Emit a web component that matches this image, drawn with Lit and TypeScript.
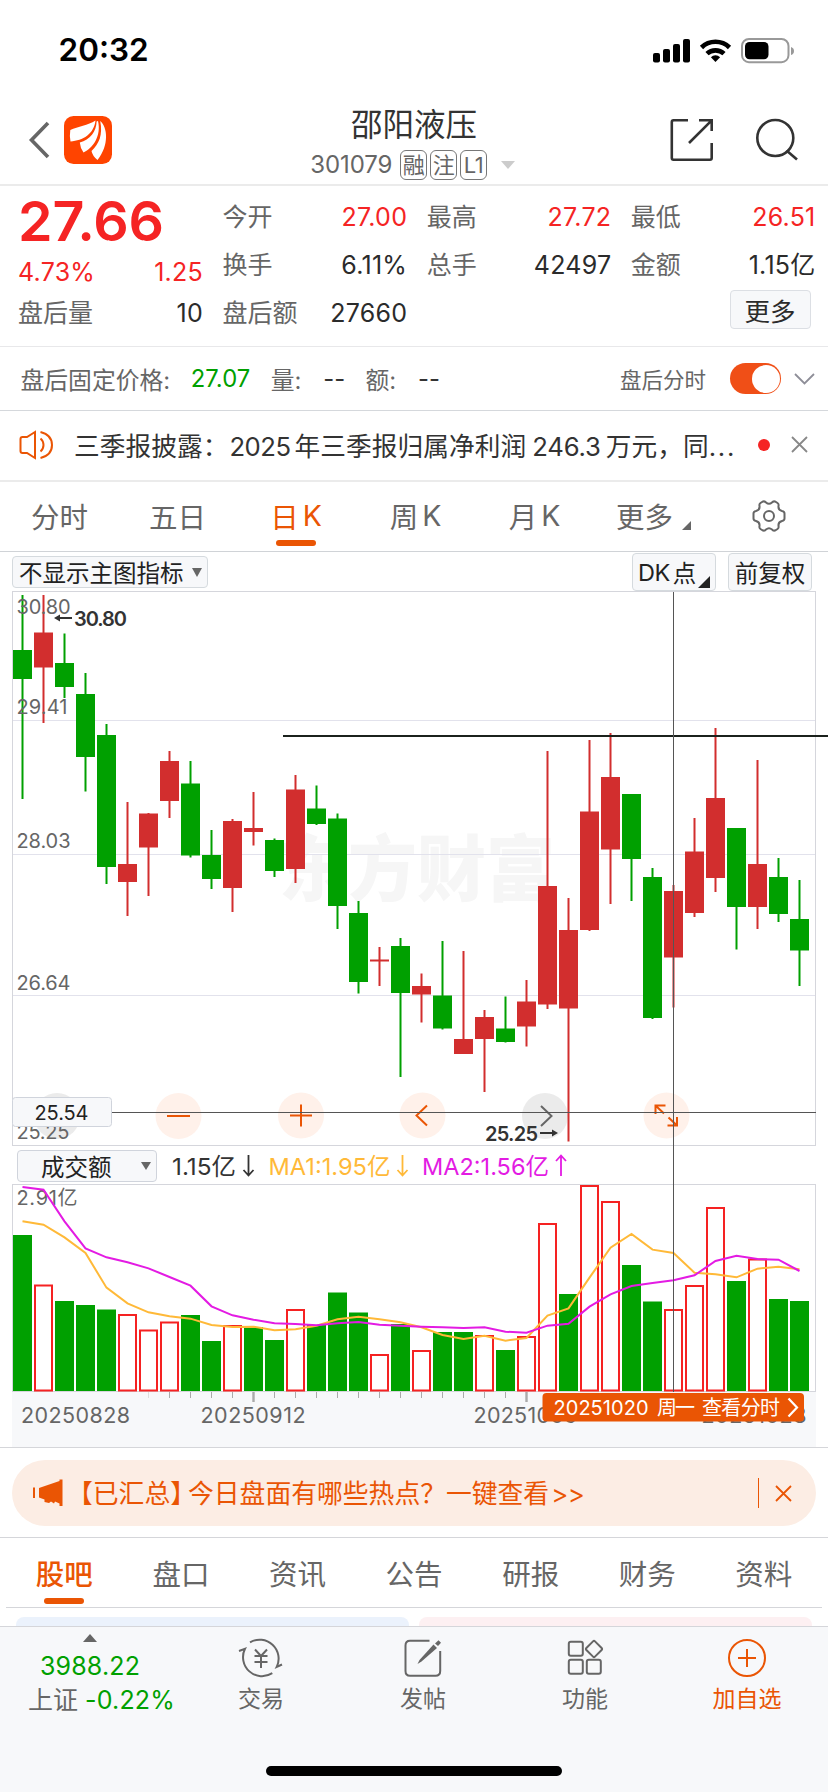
import { LitElement, html, css, svg } from "lit";
import { customElement } from "lit/decorators.js";

type Candle = [up: number, high: number, top: number, bottom: number, low: number];

const CANDLES: Candle[] = [
  [0, 595, 650, 679, 799], [1, 595, 632.5, 667.5, 723], [0, 633.5, 663, 687, 698], [0, 673, 694, 757, 791.5],
  [0, 724, 735, 867, 884], [1, 802, 864, 882, 916], [1, 813, 813.5, 847.5, 896], [1, 751, 761, 801, 818],
  [0, 761, 783.5, 855.5, 857.5], [0, 830, 855, 879, 889], [1, 819, 821, 888, 912], [1, 792, 828, 832, 845.5],
  [0, 838.5, 840, 871, 877], [1, 775, 789.5, 869, 883], [0, 785.5, 808.5, 824, 825], [0, 813.5, 818.5, 906, 929],
  [0, 901, 913, 982, 993.5], [1, 947, 959.5, 961.5, 986], [0, 938, 946, 993, 1077], [1, 973.5, 986, 994.5, 1022.5],
  [0, 941, 995.5, 1028.5, 1029.5], [1, 951, 1039, 1054, 1054], [1, 1010, 1017, 1039, 1092], [0, 996.5, 1028.5, 1042, 1042.5],
  [1, 980, 1001.5, 1026.5, 1046.5], [1, 751, 886, 1004.5, 1009], [1, 898, 930, 1008.5, 1141.5], [1, 740, 811.5, 930, 931],
  [1, 733, 777, 849.5, 904], [0, 794, 794, 859, 901], [0, 868, 877, 1018, 1019], [1, 885, 891, 957.5, 1007.5],
  [1, 818, 851.5, 913, 917], [1, 728, 798, 878, 892], [0, 828, 828, 907, 949.5], [1, 760, 864, 907, 929],
  [0, 858, 877, 914, 922], [0, 880, 919, 950.5, 986],
];

// [hollow, top]
const VOLUMES: [number, number][] = [
  [0, 1235], [1, 1284.5], [0, 1301], [0, 1305], [0, 1309.5], [1, 1314], [1, 1329.5], [1, 1321.5], [0, 1315], [0, 1341],
  [1, 1325], [0, 1327], [0, 1340], [1, 1309], [0, 1325], [0, 1292.5], [0, 1312.5], [1, 1354], [0, 1324], [1, 1350],
  [0, 1332], [0, 1332], [1, 1335], [0, 1350], [1, 1336], [1, 1223], [0, 1294], [1, 1185], [1, 1201], [0, 1265],
  [0, 1301.5], [1, 1309], [1, 1285], [1, 1207], [0, 1281], [1, 1258.5], [0, 1299], [0, 1301],
];

const MA1 = [244, 254, 292, 339, 443, 490, 517, 529, 536, 555, 561, 560, 571, 568, 557, 538, 530, 538, 547, 562, 585, 597, 587, 602, 594, 527, 505, 413, 323, 282, 329, 339, 398, 403, 412, 386, 380, 388];
const MA2 = [141, 149, 244, 325, 352, 367, 385, 411, 437, 499, 526, 539, 550, 552, 556, 550, 546, 554, 557, 560, 562, 564, 562, 575, 578, 557, 551, 500, 463, 438, 429, 421, 406, 363, 347, 357, 359, 393];

const cx = (i: number) => 22.5 + 21 * i;
const line = (ma: number[]) => ma.map((v, i) => `${cx(i)},${1140 + v / 3}`).join(" ");

const FONT = css`
  :host {
    font-family: Inter, "Noto Sans CJK SC", sans-serif;
    box-sizing: border-box;
  }
  *, *::before, *::after { box-sizing: border-box; }
  svg { display: block; flex: none; }
`;

@customElement("status-header")
class StatusHeader extends LitElement {
  static styles = [FONT, css`
    :host { display: block; height: 186px; border-bottom: 2px solid #ebebeb; }
    .status { height: 96px; display: flex; align-items: center; justify-content: space-between; padding: 3px 34px 0 58.500px; }
    .time { font-size: 31.500px; font-weight: 600; color: #000; letter-spacing: 0; }
    .nav { height: 88px; display: grid; grid-template-columns: 300px 1fr 300px; align-items: center; }
    .left { display: flex; align-items: center; padding-left: 28px; gap: 13px; }
    .mid { display: flex; flex-direction: column; align-items: center; color: #333; }
    .name { font-size: 31.500px; line-height: 40px; margin-top: 7px; }
    .code { display: flex; align-items: center; height: 36px; font-size: 24px; color: #666; gap: 2.500px; margin: 2px 0 0 -3px; }
    .num { margin-right: 5px; letter-spacing: -.1px; }
    .tag { height: 30px; width: 27.500px; border: 1.500px solid #777; border-radius: 6px; font-size: 22px; display: flex; align-items: center; justify-content: center; letter-spacing: -.5px; line-height: 1; }
    .drop { width: 0; border: 7px solid transparent; border-top: 8px solid #ccc; border-bottom: 0; margin-left: 11px; }
    .right { display: flex; align-items: center; justify-content: flex-end; gap: 41px; padding-right: 29px; }
  `];
  render() {
    return html`
      <div class="status">
        <span class="time">20:32</span>
        <svg width="142" height="28" viewBox="652 35 142 28">
          <g>
            <rect x="653" y="52" width="7" height="9.5" rx="2" /><rect x="663" y="48" width="7" height="13.5" rx="2" />
            <rect x="673" y="43" width="7" height="18.5" rx="2" /><rect x="683" y="38" width="7" height="23.5" rx="2" />
          </g>
          <g fill="none" stroke="#000" stroke-width="4.6">
            <path d="M701.5 46.5a20 20 0 0 1 28 0" /><path d="M707 52.7a12.4 12.4 0 0 1 17 0" />
          </g>
          <path d="M715.5 61l-4.6-4.8a6.6 6.6 0 0 1 9.2 0z" />
          <rect x="742" y="38" width="46.5" height="23.2" rx="7" fill="none" stroke="#999" stroke-width="2" />
          <rect x="745" y="41" width="23.5" height="17.2" rx="4.5" />
          <path d="M791 46q3 1 3 4t-3 4z" fill="#999" />
        </svg>
      </div>
      <div class="nav">
        <div class="left">
          <svg width="23" height="40" viewBox="0 0 23 40"><path d="M20 3L3.5 20 20 37" fill="none" stroke="#666" stroke-width="3.6" /></svg>
          <svg width="48" height="48" viewBox="0 0 48 48">
            <rect width="48" height="48" rx="9.5" fill="#ff4400" />
            <g fill="#fff">
              <path d="M31.5 4.500C24 9.500 14 10.500 6.300 14Q5.400 19.500 6.500 25.500C19 24.500 30 18 31.500 4.500Z" />
              <path d="M32.600 5.500C32.500 15 26 24 15.800 26.500Q16.200 32 19.500 36.500C29 32 37.500 20 34 5Z" />
              <path d="M36.200 5C43.500 11 45.500 29 33.500 44Q28.500 40 27.500 35C35 28 39 19 36.200 5Z" />
            </g>
          </svg>
        </div>
        <div class="mid">
          <div class="name">邵阳液压</div>
          <div class="code"><span class="num">301079</span><span class="tag">融</span><span class="tag">注</span><span class="tag">L1</span><i class="drop"></i></div>
        </div>
        <div class="right">
          <svg width="44" height="44" viewBox="669 118 44 44" fill="none" stroke="#333" stroke-width="2.6">
            <path d="M687 120.300H672.500Q670.800 120.300 670.800 122V158Q670.800 159.700 672.500 159.700H709Q710.700 159.700 710.700 158V143M698 120.300H710.700V131M710.700 120.300L688 143" />
          </svg>
          <svg width="44" height="44" viewBox="755 118 44 44" fill="none" stroke="#333" stroke-width="2.6">
            <circle cx="775.300" cy="138" r="18" /><path d="M786.500 150.500L797 159.500" />
          </svg>
        </div>
      </div>`;
  }
}

@customElement("quote-panel")
class QuotePanel extends LitElement {
  static styles = [FONT, css`
    :host { display: block; }
    .grid { height: 161px; border-bottom: 1px solid #e8e8ea; display: flex; gap: 19.500px; padding: 7px 12.500px 0 18px; }
    .col { display: flex; flex-direction: column; flex: 1; }
    .first { flex: 0 0 185px; }
    .cell { height: 48px; display: flex; align-items: center; justify-content: space-between; font-size: 25px; color: #666; line-height: 1; }
    .cell b { font-weight: 400; color: #2b2b2b; letter-spacing: .25px; }
    .cell .r, .price { color: #f52424; }
    .price { height: 56px; font-size: 55.500px; font-weight: 600; line-height: 56px; letter-spacing: -.2px; }
    .chg { height: 46px; }
    .first .last { margin-top: -6px; }
    .btn { align-self: flex-end; margin: 1px 5px 0 0; width: 81px; height: 39px; background: #f7f8fa; border: 1px solid #dcdfe4; border-radius: 4px; font-size: 25.500px; display: flex; align-items: center; justify-content: center; color: #2b2b2b; }
    .after { height: 64px; border-bottom: 1px solid #d5d8dc; display: flex; align-items: center; padding: 0 13px 0 20.500px; font-size: 23.800px; color: #666; white-space: pre; }
    .after b { font-weight: 400; color: #333; letter-spacing: .1px; }
    .after .g { color: #00a000; width: 60px; margin: 0 20px 0 20.500px; }
    .after .d { margin: 0 20px 0 22px; }
    .small { font-size: 21.500px; margin-left: auto; }
    .toggle { width: 51px; height: 31px; border-radius: 16px; background: #f04f17; margin: 0 13px 0 24px; padding: 1.500px; display: flex; justify-content: flex-end; }
    .toggle i { width: 28px; height: 28px; border-radius: 50%; background: #fff; }
  `];
  render() {
    const cell = (k: string, v: string, red = false) => html`<div class="cell">${k}<b class=${red ? "r" : ""}>${v}</b></div>`;
    return html`
      <div class="grid">
        <div class="col first">
          <div class="price">27.66</div>
          <div class="cell chg"><b class="r">4.73%</b><b class="r">1.25</b></div>
          <div class="cell last">盘后量<b>10</b></div>
        </div>
        <div class="col">${cell("今开", "27.00", true)}${cell("换手", "6.11%")}${cell("盘后额", "27660")}</div>
        <div class="col">${cell("最高", "27.72", true)}${cell("总手", "42497")}</div>
        <div class="col">${cell("最低", "26.51", true)}${cell("金额", "1.15亿")}<div class="btn">更多</div></div>
      </div>
      <div class="after">
        <span>盘后固定价格:</span><b class="g">27.07</b><span>量:</span><b class="d">--</b><span>额:</span><b class="d">--</b>
        <span class="small">盘后分时</span><span class="toggle"><i></i></span>
        <svg width="21" height="12" viewBox="0 0 21 12"><path d="M1 1L10.500 10.500 20 1" fill="none" stroke="#8e8e98" stroke-width="1.800" /></svg>
      </div>`;
  }
}

@customElement("news-strip")
class NewsStrip extends LitElement {
  static styles = [FONT, css`
    :host { display: flex; align-items: center; height: 71px; padding: 0 20px 2px 19px; border-bottom: 2px solid #ebebeb; }
    .text { margin-left: 20px; font-size: 25.700px; color: #333; width: 664px; white-space: nowrap; letter-spacing: .05px; }
    .n { margin: 0 4px 0 1px; letter-spacing: -.5px; }
    .m { margin: 0 5px 0 6px; letter-spacing: -.2px; }
    .e { letter-spacing: 1.700px; }
    .dot { width: 12px; height: 12px; border-radius: 50%; background: #f52424; margin: 0 21px 0 auto; }
  `];
  render() {
    return html`
      <svg width="35" height="30" viewBox="19 430 35 30" fill="none" stroke="#ea5504" stroke-width="2">
        <path d="M35 432L27 437H22.500Q20.500 437 20.500 439V451Q20.500 453 22.500 453H27L35 458ZM40.500 438.500Q43.500 441 43.500 445T40.500 451.500M40.500 432Q52 435 52 445T40.500 458" />
      </svg>
      <div class="text">三季报披露：<span class="n">2025</span>年三季报归属净利润<span class="m">246.3</span>万元，同<span class="e">...</span></div>
      <i class="dot"></i>
      <svg width="17" height="17" viewBox="0 0 17 17"><path d="M1 1L16 16M16 1L1 16" stroke="#888" stroke-width="1.800" /></svg>`;
  }
}

@customElement("period-tabs")
class PeriodTabs extends LitElement {
  static styles = [FONT, css`
    :host { display: block; }
    .tabs { height: 70px; border-bottom: 1px solid #d0d3d7; display: grid; grid-template-columns: 119px 117px 120px 119px 119px 123px 1fr; font-size: 28.500px; color: #666; }
    .tab { display: flex; align-items: center; justify-content: center; gap: 4px; padding-bottom: 2px; white-space: nowrap; position: relative; }
    .on { color: #ea5504; }
    .on::after { content: ""; position: absolute; left: 40px; bottom: 5px; width: 40px; height: 6px; border-radius: 3px; background: #ea5504; }
    .more { padding-left: 0; gap: 9px; justify-content: flex-end; padding-right: 26px; }
    .tri { border-left: 9px solid transparent; border-bottom: 9px solid #666; margin-top: 19px; }
    .gear { justify-content: flex-start; padding-left: 35px; }
    .tools { height: 39px; display: flex; align-items: flex-start; padding: 1px 16px 0 12px; font-size: 23.500px; color: #222; }
    .btn { background: #f7f8fa; border: 1px solid #d5dade; border-radius: 4px; display: flex; align-items: center; white-space: nowrap; }
    .sel { height: 32px; width: 196px; margin: 3px auto 0 0; padding: 0 0 0 6px; gap: 8px; }
    .down { border: 5px solid transparent; border-top: 9px solid #666; border-bottom: 0; }
    .dk { width: 84px; height: 38px; padding-left: 5px; margin-right: 12px; position: relative; gap: 3px; }
    .dk i { position: absolute; right: 5px; bottom: 2px; border-left: 12px solid transparent; border-bottom: 12px solid #222; }
    .fq { width: 84px; height: 38px; justify-content: center; }
    .k { letter-spacing: -.5px; }
  `];
  render() {
    return html`
      <div class="tabs">
        <div class="tab">分时</div><div class="tab">五日</div><div class="tab on">日<span>K</span></div>
        <div class="tab">周<span>K</span></div><div class="tab">月<span>K</span></div>
        <div class="tab more">更多<i class="tri"></i></div>
        <div class="tab gear"><svg width="34" height="32" viewBox="-17 -16 34 32" fill="none" stroke="#666" stroke-width="2">
          <path d="M-6 -14.500Q-4 -15 -3 -13.500Q0 -11 3 -13.500Q4 -15 6 -14.500L8.500 -13Q10 -12 9.500 -10Q9 -6 13 -5Q15.500 -4.500 15.500 -2.500V2.500Q15.500 4.500 13 5Q9 6 9.500 10Q10 12 8.500 13L6 14.500Q4 15 3 13.500Q0 11 -3 13.500Q-4 15 -6 14.500L-8.500 13Q-10 12 -9.500 10Q-9 6 -13 5Q-15.500 4.500 -15.500 2.500V-2.500Q-15.500 -4.500 -13 -5Q-9 -6 -9.500 -10Q-10 -12 -8.500 -13Z" /><circle r="5" />
        </svg></div>
      </div>
      <div class="tools">
        <div class="btn sel">不显示主图指标<i class="down"></i></div>
        <div class="btn dk"><span class="k">DK</span>点<i></i></div>
        <div class="btn fq">前复权</div>
      </div>`;
  }
}

@customElement("stock-chart")
class StockChart extends LitElement {
  static styles = [FONT, css`
    :host { display: block; position: relative; }
    .info { height: 38px; display: flex; align-items: center; padding: 2px 0 0 17px; }
    .sel { width: 140px; height: 32px; border: 1px solid #d0d4dc; border-radius: 4px; background: #f7f8fa; font-size: 23.500px; color: #222; display: flex; align-items: center; justify-content: space-between; padding: 0 5px 0 23px; }
    .sel i { border: 5px solid transparent; border-top: 8px solid #666; border-bottom: 0; }
    .over { position: absolute; inset: 0; }
    svg text { font-size: 20px; fill: #666; }
    text.mark { font-weight: 600; fill: #333; }
    text.water { font-size: 72px; font-weight: 900; fill: #f6f6f6; }
    text.cur { fill: #222; }
    text.tag { fill: #fff; }
    text.date { font-size: 21.500px; }
    text.met { font-size: 23.500px; }
    text.now { fill: #333; } text.m1 { fill: #ffb938; } text.m2 { fill: #e31be3; }
  `];
  render() {
    const red = "#d22e2e", green = "#00a000";
    const t = (x: number, y: number, w: number, s: string, c = "") =>
      svg`<text x=${x} y=${y} textLength=${w} lengthAdjust=${c === "water" || c.startsWith("met") ? "spacingAndGlyphs" : "spacing"} class=${c}>${s}</text>`;
    return html`
      <svg width="828" height="555" viewBox="0 591 828 555">
        <rect x="12.500" y="591.500" width="803" height="554" fill="#fff" stroke="#d5d6dc" />
        ${t(279, 895, 276, "东方财富", "water")}
        <path d="M13 720.500H815M13 854.500H815M13 995.500H815" stroke="#e2e2ec" />
        <g>
          <circle cx="57" cy="1116" r="23" fill="#ebebeb" /><circle cx="178.500" cy="1116" r="23" fill="#fff1ea" />
          <circle cx="301" cy="1115.500" r="23" fill="#fff1ea" /><circle cx="422.500" cy="1115.500" r="23" fill="#fff1ea" />
          <circle cx="545" cy="1116" r="23" fill="#ebebeb" /><circle cx="666.500" cy="1115.500" r="23" fill="#fff1ea" />
        </g>
        ${CANDLES.map(([up, hi, top, bot, lo], i) => svg`
          <rect x=${cx(i) - 1} y=${hi} width="2" height=${lo - hi} fill=${up ? red : green} />
          <rect x=${cx(i) - 9.5} y=${top} width="19" height=${bot - top} fill=${up ? red : green} />`)}
        ${t(16.5, 614, 54, "30.80")}${t(16.5, 714, 51, "29.41")}${t(16.5, 848, 54, "28.03")}${t(16.5, 990, 54, "26.64")}${t(16.5, 1139, 53, "25.25")}
        <path d="M59 618H72" stroke="#333" stroke-width="2" /><path d="M54 618L60 614.500V621.500Z" fill="#333" />
        ${t(74, 626, 53, "30.80", "mark")}${t(485, 1140.5, 53, "25.25", "mark")}
        <path d="M540 1133H553" stroke="#333" stroke-width="2" /><path d="M558 1133L552 1129.500V1136.500Z" fill="#333" />
        <path d="M283 736H828" stroke="#1b211c" stroke-width="2.200" />
        <g stroke="#ea5504" stroke-width="2" fill="none">
          <path d="M167 1116H190M290 1115.500H312M301 1104.500V1126.500M427 1105.500L416.500 1115.500 427 1125.500" />
          <path d="M655.500 1114V1105.500H665.500M656 1106L664 1113.500M677 1117V1125.500H667.500M668.500 1117.500L676.500 1125" />
        </g>
        <path d="M541 1106L551.500 1116 541 1126" stroke="#666" stroke-width="2" fill="none" />
      </svg>
      <div class="info">
        <div class="sel">成交额<i></i></div>
      </div>
      <svg width="828" height="264" viewBox="0 1184 828 264">
        <rect x="12" y="1392" width="804" height="55" fill="#f7f8fa" />
        <rect x="12.500" y="1184.500" width="803" height="207" fill="#fff" stroke="#d5d6dc" />
        ${VOLUMES.map(([h, top], i) => h
          ? svg`<rect x=${cx(i) - 8.5} y=${top + 1} width="17" height=${1389.5 - top} fill="#fff" stroke="#f52222" stroke-width="2" />`
          : svg`<rect x=${cx(i) - 9.5} y=${top} width="19" height=${1391 - top} fill=${green} />`)}
        ${t(16.5, 1205, 61, "2.91亿")}
        <polyline points=${line(MA1)} fill="none" stroke="#ffb938" stroke-width="2" />
        <polyline points=${line(MA2)} fill="none" stroke="#e31be3" stroke-width="2" />
        ${Array.from({ length: 19 }, (_, k) => k + 6).map((i) => {
          const major = i === 11 || i === 24;
          return svg`<path d="M${cx(i)} 1392V${major ? 1402 : 1398}" stroke=${i === 6 ? "#ddd" : "#aaa"} stroke-width=${major ? 2.4 : 1} />`;
        })}
        ${t(21, 1422.500, 109, "20250828", "date")}${t(200.5, 1422.500, 105, "20250912", "date")}
        ${t(473.5, 1422.500, 104, "20251009", "date")}${t(701.5, 1422.500, 105, "20251028", "date")}
        <path d="M0 1447.500H828" stroke="#d5d6da" />
      </svg>
      <svg class="over" width="828" height="857" viewBox="0 591 828 857">
        ${t(172, 1174.500, 64, "1.15亿", "met now")}${t(268.5, 1174.500, 122, "MA1:1.95亿", "met m1")}${t(422, 1174.500, 127, "MA2:1.56亿", "met m2")}
        <g fill="none" stroke-width="1.800">
          <path d="M248.500 1155V1175M243.500 1170L248.500 1175.500 253.500 1170" stroke="#333" />
          <path d="M402.500 1155V1175M397.500 1170L402.500 1175.500 407.500 1170" stroke="#ffb938" />
          <path d="M561 1176V1156M556 1161L561 1155.500 566 1161" stroke="#e31be3" />
        </g>
        <path d="M13 1112.500H816" stroke="#555" /><path d="M673.500 592V1392" stroke="#555" />
        <rect x="12.500" y="1097.500" width="99" height="29" rx="3" fill="#f7f8fa" stroke="#d0d4dc" />
        ${t(34.5, 1119.500, 54, "25.54", "cur")}
        <rect x="542.500" y="1393" width="261.500" height="28.500" rx="4" fill="#ea5504" />
        ${t(553.5, 1414.500, 95, "20251020", "tag")}${t(657, 1414.500, 38, "周一", "tag")}${t(702, 1414.500, 78, "查看分时", "tag")}
        <path d="M788.500 1398.500L797 1407.500 788.500 1416.500" fill="none" stroke="#fff" stroke-width="2.200" />
      </svg>`;
  }
}

@customElement("promo-tabs")
class PromoTabs extends LitElement {
  static styles = [FONT, css`
    :host { display: block; }
    .wrap { height: 90px; padding: 12px 12px 0; border-bottom: 1px solid #d5d6da; }
    .pill { height: 66px; border-radius: 33px; background: #fcede4; color: #ea5504; display: flex; align-items: center; padding: 0 24px 0 20px; font-size: 25.800px; white-space: nowrap; }
    .txt { margin: 0 auto 0 4px; padding-bottom: 3px; }
    .br { margin-right: -8px; }
    .gt { letter-spacing: -.5px; margin-left: 2px; }
    .close { border-left: 1.500px solid #ea5504; height: 30px; padding-left: 16px; display: flex; align-items: center; }
    .tabs { height: 70px; margin: 0 6px; border-bottom: 1px solid #d5d6da; display: grid; grid-template-columns: repeat(7, 116.600px); font-size: 28.500px; color: #666; }
    .tab { display: flex; align-items: center; justify-content: center; position: relative; padding-bottom: 1px; }
    .on { color: #ea5504; font-weight: 500; }
    .on::after { content: ""; position: absolute; left: 38px; bottom: 3px; width: 40px; height: 6px; border-radius: 3px; background: #ea5504; }
    .cards { height: 18px; padding: 9px 16px 0; display: grid; grid-template-columns: 1fr 1fr; gap: 10px; }
    .card { border-radius: 8px 8px 0 0; background: #ebf2fc; }
    .pink { background: #fdf0f2; }
  `];
  render() {
    return html`
      <div class="wrap"><div class="pill">
        <svg width="31" height="28" viewBox="31 1479 31 28" fill="#ea5504"><path d="M38 1488L58.500 1481V1479.500H61.500V1506H58.500V1503.500L54 1501.500 53 1503.500 50 1501.500 48 1503 43.500 1502V1499.500L38 1497.500Z" /><path d="M32 1487.500H34V1498H32Z" /></svg>
        <span class="txt"><span class="br">【已汇总】</span>今日盘面有哪些热点？一键查看<span class="gt">&gt;&gt;</span></span>
        <span class="close"><svg width="17" height="17" viewBox="0 0 17 17"><path d="M1 1L16 16M16 1L1 16" stroke="#ea5504" stroke-width="1.800" /></svg></span>
      </div></div>
      <div class="tabs">${["股吧", "盘口", "资讯", "公告", "研报", "财务", "资料"].map((s, i) => html`<div class="tab ${i ? "" : "on"}">${s}</div>`)}</div>
      <div class="cards"><div class="card"></div><div class="card pink"></div></div>`;
  }
}

@customElement("bottom-bar")
class BottomBar extends LitElement {
  static styles = [FONT, css`
    :host { display: flex; flex-direction: column; align-items: center; height: 166px; background: #f7f8fa; border-top: 1px solid #d5d6da; }
    .row { display: grid; grid-template-columns: 180px repeat(4, 162px); width: 828px; height: 139px; }
    .item { display: flex; flex-direction: column; align-items: center; color: #666; font-size: 23px; padding-top: 9px; line-height: 34px; }
    .item svg { margin-bottom: 2px; }
    .hot { color: #ea5504; }
    .idx { display: flex; flex-direction: column; align-items: center; padding-top: 7px; color: #666; font-size: 25px; line-height: 34px; white-space: nowrap; }
    .up { border: 7px solid transparent; border-bottom: 8px solid #666; border-top: 0; margin-bottom: 7px; }
    .g { color: #00a000; letter-spacing: .15px; }
    .home { width: 296px; height: 10px; border-radius: 5px; background: #000; }
    .pair { display: flex; gap: 7px; margin-left: 23px; }
  `];
  render() {
    return html`
      <div class="row">
        <div class="idx"><i class="up"></i><span class="g">3988.22</span><span class="pair">上证<span class="g">-0.22%</span></span></div>
        <div class="item"><svg width="46" height="44" viewBox="18 11 46 44" fill="none" stroke="#666" stroke-width="2">
          <path d="M30 17.300A19 19 0 0 1 56.700 42L62 39.500M52.300 48.200A19 19 0 0 1 25 23.800L19 26M35 24.500L41 31 47 24.500M34.500 31H47.500M34.500 37H47.500M41 31V43" /></svg>交易</div>
        <div class="item"><svg width="44" height="44" viewBox="181.500 11 44 44" fill="none" stroke="#666" stroke-width="2">
          <path d="M210 15.800H190.500Q186 15.800 186 20.500V46Q186 50.800 190.500 50.800H216Q220.700 50.800 220.700 46V26" /><path d="M214 19.500L217.500 23 202 36.500 198 39 200 35Z" fill="#666" stroke="none" /><path d="M215.500 18.500L219 15.200L221.500 17.800 218.500 21Z" fill="#666" stroke="none" /></svg>发帖</div>
        <div class="item"><svg width="44" height="44" viewBox="343 11 44 44" fill="none" stroke="#666" stroke-width="2">
          <rect x="348.800" y="16.800" width="14" height="14" rx="2" /><rect x="348.800" y="34.800" width="14" height="14" rx="2" /><rect x="366.800" y="34.800" width="14" height="14" rx="2" /><path d="M373 16.400Q374 15.400 375 16.400L381.600 23Q382.600 24 381.600 25L375 31.600Q374 32.600 373 31.600L366.400 25Q365.400 24 366.400 23Z" /></svg>功能</div>
        <div class="item hot"><svg width="44" height="44" viewBox="-22 -22 44 44" fill="none" stroke="#ea5504" stroke-width="2"><circle r="18" /><path d="M-9 0H9M0 -9V9" /></svg>加自选</div>
      </div>
      <div class="home"></div>`;
  }
}

@customElement("app-root")
class AppRoot extends LitElement {
  static styles = css`
    :host { display: block; width: 828px; height: 1792px; background: #fff; overflow: hidden; }
  `;
  render() {
    return html`<status-header></status-header><quote-panel></quote-panel><news-strip></news-strip>
      <period-tabs></period-tabs><stock-chart></stock-chart><promo-tabs></promo-tabs><bottom-bar></bottom-bar>`;
  }
}
